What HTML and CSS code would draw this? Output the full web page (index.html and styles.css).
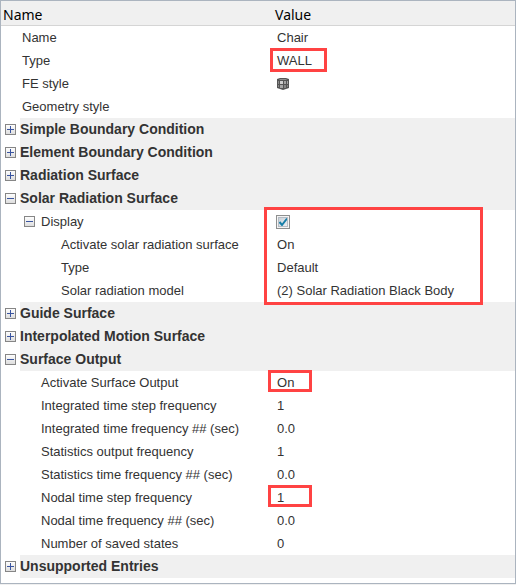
FILE: index.html
```html
<!DOCTYPE html>
<html lang="en">
<head>
    <meta charset="utf-8">
    <title>Entity Editor</title>
    <link rel="stylesheet" href="styles.css">
</head>
<body>
<svg class="defs" aria-hidden="true">
    <defs>
        <linearGradient id="box-fill" x1="0" y1="0" x2="0" y2="1">
            <stop offset="0" stop-color="#ffffff"/>
            <stop offset="1" stop-color="#dcdcdc"/>
        </linearGradient>
    </defs>
    <symbol id="plus" viewBox="0 0 11 11">
        <rect x=".5" y=".5" width="10" height="10" fill="url(#box-fill)" stroke="#868686"/>
        <path d="M2 5.5h7M5.5 2v7" stroke="#3a55a0"/>
    </symbol>
    <symbol id="minus" viewBox="0 0 11 11">
        <rect x=".5" y=".5" width="10" height="10" fill="url(#box-fill)" stroke="#868686"/>
        <path d="M2 5.5h7" stroke="#3a55a0"/>
    </symbol>
</svg>

<main class="editor">
    <table class="grid">
        <colgroup>
            <col class="col-gutter">
            <col class="col-name">
            <col class="col-value">
        </colgroup>
        <thead>
            <tr><th colspan="2">Name</th><th class="value">Value</th></tr>
        </thead>
        <tbody>
            <tr><td></td><td>Name</td><td class="value">Chair</td></tr>
            <tr><td></td><td>Type</td><td class="value">WALL<span class="mark mark-type"></span></td></tr>
            <tr>
                <td></td>
                <td>FE style</td>
                <td class="value">
                    <svg class="mesh" viewBox="0 0 12 12" role="img" aria-label="Mesh">
                        <path d="M0 1L3 0h6l3 1v9l-3 1-3 1-3-1-3-1z" fill="#555"/>
                        <path d="M3 1h6l1 1H2z" fill="#8c8c8c"/>
                        <path d="M1 3h1v3H1zM1 7h1v2H1z" fill="#8a8a8a"/>
                        <path d="M3 3h3v3H3z" fill="#cfcfcf"/>
                        <path d="M3 7h3v3H3z" fill="#a6a6a6"/>
                        <path d="M7 3h2v3H7zM10 3h1v3h-1z" fill="#a3a3a3"/>
                        <path d="M7 7h2v3H7zM10 7h1v2h-1z" fill="#858585"/>
                    </svg>
                </td>
            </tr>
            <tr><td></td><td>Geometry style</td><td class="value"></td></tr>

            <tr class="group">
                <td><button class="toggle" aria-label="Expand Simple Boundary Condition"><svg><use href="#plus"/></svg></button></td>
                <td>Simple Boundary Condition</td><td></td>
            </tr>
            <tr class="group">
                <td><button class="toggle" aria-label="Expand Element Boundary Condition"><svg><use href="#plus"/></svg></button></td>
                <td>Element Boundary Condition</td><td></td>
            </tr>
            <tr class="group">
                <td><button class="toggle" aria-label="Expand Radiation Surface"><svg><use href="#plus"/></svg></button></td>
                <td>Radiation Surface</td><td></td>
            </tr>

            <tr class="group">
                <td><button class="toggle" aria-label="Collapse Solar Radiation Surface"><svg><use href="#minus"/></svg></button></td>
                <td>Solar Radiation Surface</td><td></td>
            </tr>
            <tr>
                <td></td>
                <td class="branch">
                    <div class="branch-row">
                        <button class="toggle" aria-label="Collapse Display"><svg><use href="#minus"/></svg></button>
                        <label for="display">Display</label>
                    </div>
                </td>
                <td class="value"><input type="checkbox" id="display" class="check" checked><span class="mark mark-solar"></span></td>
            </tr>
            <tr><td></td><td class="level-3">Activate solar radiation surface</td><td class="value">On</td></tr>
            <tr><td></td><td class="level-3">Type</td><td class="value">Default</td></tr>
            <tr><td></td><td class="level-3">Solar radiation model</td><td class="value">(2) Solar Radiation Black Body</td></tr>

            <tr class="group">
                <td><button class="toggle" aria-label="Expand Guide Surface"><svg><use href="#plus"/></svg></button></td>
                <td>Guide Surface</td><td></td>
            </tr>
            <tr class="group">
                <td><button class="toggle" aria-label="Expand Interpolated Motion Surface"><svg><use href="#plus"/></svg></button></td>
                <td>Interpolated Motion Surface</td><td></td>
            </tr>

            <tr class="group">
                <td><button class="toggle" aria-label="Collapse Surface Output"><svg><use href="#minus"/></svg></button></td>
                <td>Surface Output</td><td></td>
            </tr>
            <tr><td></td><td class="level-2">Activate Surface Output</td><td class="value">On<span class="mark mark-small"></span></td></tr>
            <tr><td></td><td class="level-2">Integrated time step frequency</td><td class="value">1</td></tr>
            <tr><td></td><td class="level-2">Integrated time frequency ## (sec)</td><td class="value">0.0</td></tr>
            <tr><td></td><td class="level-2">Statistics output frequency</td><td class="value">1</td></tr>
            <tr><td></td><td class="level-2">Statistics time frequency ## (sec)</td><td class="value">0.0</td></tr>
            <tr><td></td><td class="level-2">Nodal time step frequency</td><td class="value">1<span class="mark mark-small"></span></td></tr>
            <tr><td></td><td class="level-2">Nodal time frequency ## (sec)</td><td class="value">0.0</td></tr>
            <tr><td></td><td class="level-2">Number of saved states</td><td class="value">0</td></tr>

            <tr class="group">
                <td><button class="toggle" aria-label="Expand Unsupported Entries"><svg><use href="#plus"/></svg></button></td>
                <td>Unsupported Entries</td><td></td>
            </tr>
        </tbody>
    </table>
</main>
</body>
</html>
```
FILE: styles.css
```css
body {
    margin: 0;
    background-color: #f0f0f0;
    color: #333;
    font-family: "Liberation Sans", Arial, sans-serif;
    font-size: 13px;
}
.defs {
    position: absolute;
    width: 0;
    height: 0;
}
.editor {
    border: 1px solid #abb4bf;
    background-color: #fff;
    padding-bottom: 5px;
}
.grid {
    width: 100%;
    table-layout: fixed;
    border-collapse: separate;
    border-spacing: 0;
}
.col-gutter {
    width: 19px;
}
.col-name {
    width: 251px;
}
.grid th {
    box-sizing: border-box;
    height: 25px;
    padding: 4px 0 0 2px;
    border-bottom: 1px solid #d5d5d5;
    background-color: #f0f0f0;
    color: #000;
    font-family: "Noto Sans", "Segoe UI", sans-serif;
    font-size: 14px;
    font-weight: normal;
    line-height: 20px;
    text-align: left;
}
.grid th.value {
    padding-left: 4px;
}
.grid td {
    height: 23px;
    padding: 0 0 0 2px;
    line-height: 23px;
    white-space: nowrap;
}
.grid td:first-child {
    padding-left: 4px;
}
.grid td.value {
    position: relative;
    padding-left: 6px;
}
.grid td.level-2 {
    padding-left: 21px;
}
.grid td.level-3 {
    padding-left: 41px;
}
.grid td.branch {
    padding-left: 4px;
}
.branch-row {
    display: flex;
    align-items: center;
    gap: 6px;
}
.group td {
    background-color: #f0f0f0;
    font-size: 14px;
    font-weight: bold;
}
.grid .group td {
    padding-left: 0;
}
.grid .group td:first-child {
    padding-left: 4px;
    background-color: #fff;
}
.toggle {
    display: block;
    width: 11px;
    height: 11px;
    padding: 0;
    border: none;
    background: none;
    cursor: pointer;
}
.toggle svg {
    display: block;
    width: 11px;
    height: 11px;
}
.mesh {
    display: block;
    width: 12px;
    height: 12px;
}
.check {
    display: block;
    appearance: none;
    box-sizing: border-box;
    width: 14px;
    height: 14px;
    margin: 0 0 0 -1px;
    border: 1px solid #8e8f8f;
    background: linear-gradient(135deg, #c3cbd3, #f3f5f7);
    box-shadow: inset 0 0 0 1px #f4f4f4, inset 0 0 0 2px #b5bcc4;
}
.check:checked {
    background: url("data:image/svg+xml,%3Csvg xmlns='http://www.w3.org/2000/svg' viewBox='0 0 12 12'%3E%3Cpath d='M2.5 6l2.500 3 5-6.500' fill='none' stroke='%23157ea8' stroke-width='2'/%3E%3C/svg%3E") center / 12px 12px no-repeat, linear-gradient(135deg, #c3cbd3, #f3f5f7);
}

/* red callouts drawn over the values */
.mark {
    position: absolute;
    z-index: 1;
    box-sizing: border-box;
    border: 3px solid #ff4343;
    pointer-events: none;
}
.mark-type {
    top: -1px;
    left: -1px;
    width: 57px;
    height: 24px;
}
.mark-solar {
    top: -3px;
    left: -7px;
    width: 219px;
    height: 98px;
}
.mark-small {
    top: -1px;
    left: -3px;
    width: 44px;
    height: 22px;
}
```
